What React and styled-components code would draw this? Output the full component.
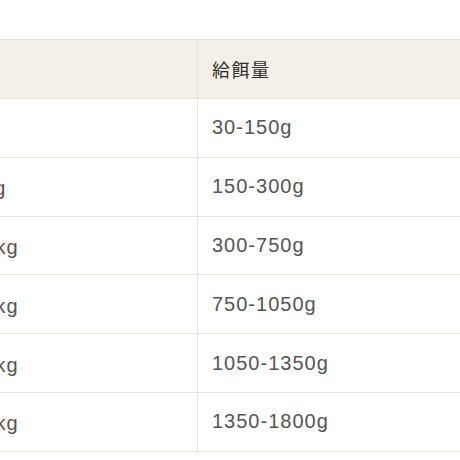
import styled, { createGlobalStyle } from 'styled-components';

const GlobalStyle = createGlobalStyle`
  html, body {
    margin: 0;
    padding: 0;
    background: #ffffff;
  }
  body {
    font-family: "Liberation Sans", "Noto Sans CJK JP", sans-serif;
  }
`;

const Page = styled.div`
  width: 460px;
  height: 460px;
  overflow: hidden;
  padding-top: 39px;
  box-sizing: border-box;
`;

const Table = styled.table`
  border-collapse: collapse;
  table-layout: fixed;
  width: 572px;
  margin-left: -89px;
`;

const HeadCell = styled.th`
  height: 58px;
  padding: 0 14px;
  background: #f4f0e8;
  border: 1px solid #e9e4dc;
  text-align: left;
  font-size: 18px;
  font-weight: 400;
  letter-spacing: 1.5px;
  color: #2e2e2e;
  font-family: "Liberation Sans", "Noto Sans CJK JP", sans-serif;
`;

const Cell = styled.td`
  height: 57.8px;
  padding: 0 14px;
  border: 1px solid #e9e4dc;
  font-size: 20px;
  letter-spacing: 1px;
  color: #555555;
  white-space: nowrap;
`;

const rows = [
  ['1〜5kg', '30-150g'],
  ['5〜10kg', '150-300g'],
  ['10〜15kg', '300-750g'],
  ['15〜20kg', '750-1050g'],
  ['20〜25kg', '1050-1350g'],
  ['25〜30kg', '1350-1800g'],
];

export default function App() {
  return (
    <>
      <GlobalStyle />
      <Page>
        <Table>
          <colgroup>
            <col style={{ width: 286 }} />
            <col style={{ width: 286 }} />
          </colgroup>
          <thead>
            <tr>
              <HeadCell>体重</HeadCell>
              <HeadCell>給餌量</HeadCell>
            </tr>
          </thead>
          <tbody>
            {rows.map(([weight, amount]) => (
              <tr key={weight}>
                <Cell>{weight}</Cell>
                <Cell>{amount}</Cell>
              </tr>
            ))}
          </tbody>
        </Table>
      </Page>
    </>
  );
}
